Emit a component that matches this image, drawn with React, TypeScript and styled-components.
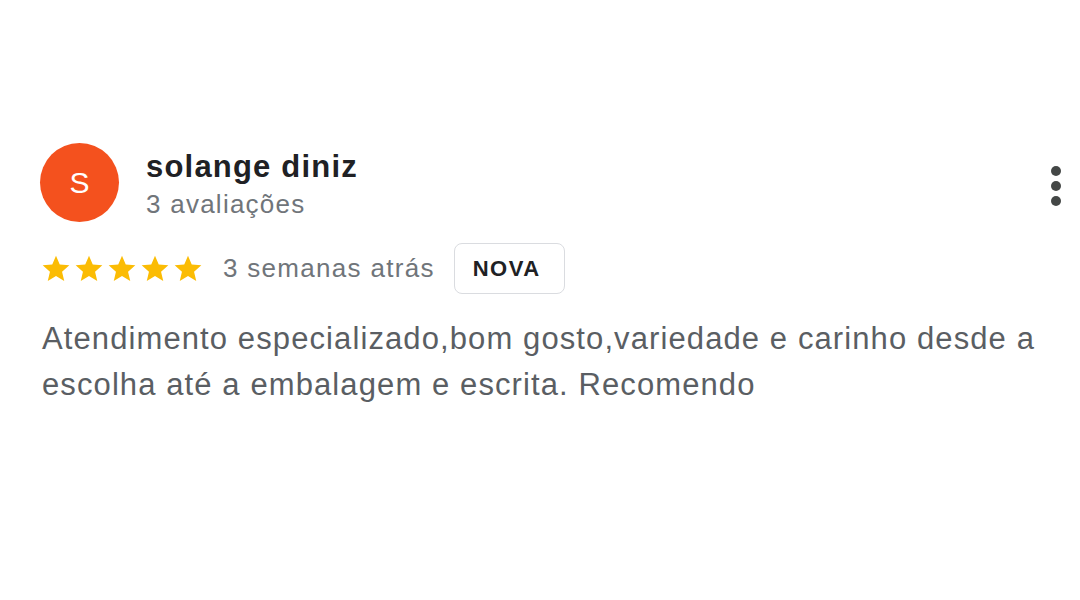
import React from "react";
import styled, { createGlobalStyle } from "styled-components";

const Global = createGlobalStyle`
  html, body { margin: 0; padding: 0; background: #fff; }
  body { font-family: "Liberation Sans", Arial, sans-serif; }
`;

const Page = styled.div`
  width: 1080px;
  height: 600px;
  box-sizing: border-box;
  padding: 143px 0 0 40px;
`;

const Header = styled.div`
  display: flex;
  align-items: flex-start;
  width: 1021px;
`;

const Avatar = styled.div`
  width: 79px;
  height: 79px;
  border-radius: 50%;
  background: #f4511e;
  color: #fff;
  display: flex;
  align-items: center;
  justify-content: center;
  font-size: 30px;
  flex-shrink: 0;
`;

const Who = styled.div`
  display: flex;
  flex-direction: column;
  margin: 5px 0 0 27px;
  flex: 1;
`;

const Name = styled.div`
  font-size: 31px;
  font-weight: bold;
  letter-spacing: 1.2px;
  color: #202124;
  line-height: 38px;
`;

const Count = styled.div`
  font-size: 26px;
  letter-spacing: 1.25px;
  color: #70757a;
  line-height: 36px;
`;

const More = styled.button`
  border: 0;
  background: none;
  padding: 0;
  margin-top: 23px;
  width: 10px;
  display: flex;
  flex-direction: column;
  align-items: center;
  gap: 5px;
`;

const Dot = styled.span`
  width: 10px;
  height: 10px;
  border-radius: 50%;
  background: #444746;
`;

const Meta = styled.div`
  display: flex;
  align-items: center;
  margin-top: 21px;
`;

const Stars = styled.div`
  display: flex;
  gap: 1px;
  margin-right: 19px;
`;

const When = styled.span`
  font-size: 26px;
  letter-spacing: 1.3px;
  color: #70757a;
  margin-right: 19px;
`;

const Badge = styled.span`
  box-sizing: border-box;
  border: 1px solid #dadce0;
  border-radius: 8px;
  padding: 0 0 0 18px;
  width: 111px;
  height: 51px;
  display: inline-flex;
  align-items: center;
  font-size: 22px;
  font-weight: bold;
  letter-spacing: 1.5px;
  color: #202124;
`;

const Body = styled.p`
  margin: 22px 0 0 2px;
  font-size: 31px;
  letter-spacing: 1.1px;
  line-height: 46px;
  color: #5a5e63;
  width: 1000px;
`;

const Star = () => (
  <svg width="32" height="32" viewBox="0 0 24 24">
    <path
      fill="#fbbc04"
      d="M12 17.27L18.18 21l-1.64-7.03L22 9.24l-7.19-.61L12 2 9.19 8.63 2 9.24l5.46 4.73L5.82 21z"
    />
  </svg>
);

export default function App() {
  return (
    <>
      <Global />
      <Page>
        <Header>
          <Avatar>S</Avatar>
          <Who>
            <Name>solange diniz</Name>
            <Count>3 avaliações</Count>
          </Who>
          <More aria-label="Mais opções">
            <Dot />
            <Dot />
            <Dot />
          </More>
        </Header>
        <Meta>
          <Stars>
            <Star />
            <Star />
            <Star />
            <Star />
            <Star />
          </Stars>
          <When>3 semanas atrás</When>
          <Badge>NOVA</Badge>
        </Meta>
        <Body>
          Atendimento especializado,bom gosto,variedade e carinho desde a
          escolha até a embalagem e escrita. Recomendo
        </Body>
      </Page>
    </>
  );
}
